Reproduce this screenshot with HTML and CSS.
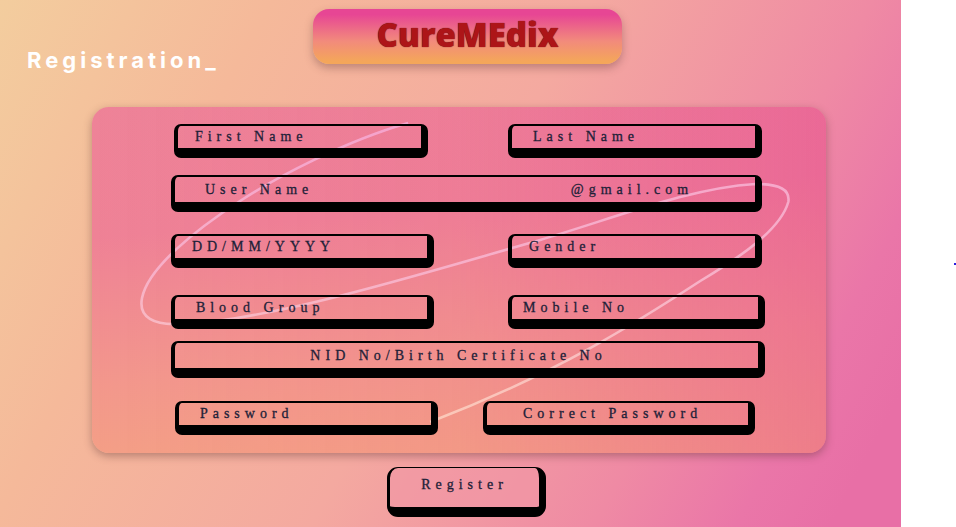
FILE: index.html
```html
<!DOCTYPE html>
<html lang="en">
<head>
<meta charset="utf-8">
<title>CureMEdix Registration</title>
<link rel="stylesheet" href="styles.css">
</head>
<body>
<main class="stage">
  <header class="header">
    <h1 class="heading">Registration_</h1>
    <div class="brand">CureMEdix</div>
  </header>
  <form class="form">
    <div class="panel">
      <svg class="swirl" viewBox="92 107 734 346" preserveAspectRatio="none" aria-hidden="true">
        <defs>
          <linearGradient id="swirl-ink" x1="0" y1="0" x2="0" y2="1">
            <stop offset="0" stop-color="#f5a3cc"/>
            <stop offset="0.5" stop-color="#f7b0c8"/>
            <stop offset="1" stop-color="#fbc9b8"/>
          </linearGradient>
        </defs>
        <path d="M408 123C345 141 275 178 240 201C195 230 148 268 142 298C138 318 155 325 178 324C270 322 440 268 540 240C620 216 690 188 755 184C780 184 790 190 788 202C780 230 740 257 700 281C640 320 560 372 430 422"/>
      </svg>
      <div class="row row-names">
        <input class="field pad-m" type="text" aria-label="First Name" placeholder="First Name">
        <input class="field pad-l" type="text" aria-label="Last Name" placeholder="Last Name">
      </div>
      <div class="row row-user">
        <div class="field field-tall field-group pad-xl">
          <input class="bare" type="text" aria-label="User Name" placeholder="User Name">
          <span class="suffix">@gmail.com</span>
        </div>
      </div>
      <div class="row row-birth">
        <input class="field pad-m" type="text" aria-label="Date of birth" placeholder="DD/MM/YYYY">
        <input class="field pad-m" type="text" aria-label="Gender" placeholder="Gender">
      </div>
      <div class="row row-contact">
        <input class="field pad-l" type="text" aria-label="Blood Group" placeholder="Blood Group">
        <input class="field pad-s" type="tel" aria-label="Mobile No" placeholder="Mobile No">
      </div>
      <div class="row row-id">
        <input class="field field-tall centered" type="text" aria-label="NID No/Birth Certificate No" placeholder="NID No/Birth Certificate No">
      </div>
      <div class="row row-password">
        <input class="field pad-l" type="password" aria-label="Password" placeholder="Password">
        <input class="field pad-xxl" type="password" aria-label="Correct Password" placeholder="Correct Password">
      </div>
    </div>
    <button class="register" type="submit">Register</button>
  </form>
</main>
<aside class="margin"><span class="marker"></span></aside>
</body>
</html>
```
FILE: styles.css
```css
* {
  box-sizing: border-box;
}

body {
  margin: 0;
  min-height: 100vh;
  display: grid;
  grid-template-columns: 901fr 55fr;
  background: #fff;
  font-family: "Liberation Serif", serif;
}

.stage {
  padding-top: 9px;
  background: linear-gradient(118deg, #f3cd9e 0%, #f5b99a 23%, #f4a9a0 50%, #ef8aa4 74%, #ea76a8 86%, #e86fa6 94%);
}

.header {
  display: grid;
  grid-template-columns: 313fr 309fr 279fr;
  align-items: start;
  height: 67px;
}

.heading {
  align-self: end;
  margin: 0;
  padding-left: 27px;
  font: 700 22px/32px Inter, sans-serif;
  letter-spacing: 4px;
  color: #fff;
}

.brand {
  height: 55px;
  border-radius: 16px;
  background: linear-gradient(#e74694 10%, #f28a7c 58%, #f4a65a 95%);
  box-shadow: 0 4px 8px rgba(90, 50, 50, 0.35);
  color: #ad1518;
  font: 800 33px/52px "Open Sans", sans-serif;
  text-align: center;
  text-shadow: 0 0 1px #4a0808;
}

.form {
  display: flex;
  flex-direction: column;
  align-items: center;
}

.panel {
  position: relative;
  align-self: flex-start;
  width: 81.5%;
  margin: 31px 0 14px 10.2%;
  padding: 17px 61px 18px 79px;
  border-radius: 17px;
  background:
    linear-gradient(to right, rgba(228, 70, 150, 0), rgba(228, 70, 150, 0.1) 50%, rgba(228, 70, 150, 0.42)),
    linear-gradient(175deg, #ee8398 0%, #ef8296 32%, #f3988c 68%, #f5a581 100%);
  box-shadow: 0 3px 8px rgba(90, 50, 50, 0.4);
}

.swirl {
  position: absolute;
  inset: 0;
  width: 100%;
  height: 100%;
  fill: none;
  stroke: url(#swirl-ink);
  stroke-width: 2.6;
}

.row {
  position: relative;
  display: grid;
}

.row-names {
  grid-template-columns: 1fr 1fr;
  gap: 80px;
  padding: 0 3px;
}

.row-user {
  margin-top: 17px;
  padding-right: 3px;
}

.row-birth {
  grid-template-columns: 263fr 254fr;
  gap: 74px;
  margin-top: 22px;
  padding-right: 3px;
}

.row-contact {
  grid-template-columns: 263fr 257fr;
  gap: 74px;
  margin-top: 27px;
}

.row-id {
  margin-top: 12px;
}

.row-password {
  grid-template-columns: 263fr 272fr;
  gap: 45px;
  margin-top: 23px;
  padding: 0 10px 0 4px;
}

.field {
  width: 100%;
  min-width: 0;
  height: 34px;
  padding: 0;
  border: solid #000;
  border-width: 2px 7px 10px 4px;
  border-radius: 7px;
  background: transparent;
  outline: 0;
}

.field-tall {
  height: 37px;
}

.field,
.bare,
.register {
  font: 14px/20px "Liberation Serif", serif;
  letter-spacing: 5px;
  color: #1d2138;
  -webkit-text-stroke: 0.3px #1d2138;
}

.field::placeholder,
.bare::placeholder {
  color: #1d2138;
  opacity: 1;
}

.field-group {
  display: flex;
  align-items: center;
  justify-content: space-between;
}

.bare {
  flex: 1;
  min-width: 0;
  padding: 0;
  border: 0;
  background: transparent;
  outline: 0;
}

.suffix {
  margin-right: 62px;
}

.pad-s { padding-left: 11px; }
.pad-m { padding-left: 17px; }
.pad-l { padding-left: 21px; }
.pad-xl { padding-left: 30px; }
.pad-xxl { padding-left: 36px; }

.centered {
  padding-right: 16px;
  text-align: center;
}

.register {
  width: 159px;
  height: 50px;
  margin-left: 32px;
  padding: 0 0 6px;
  border: solid #000;
  border-width: 1px 7px 10px 3px;
  border-radius: 11px;
  background: rgba(242, 150, 165, 0.6);
}

.margin {
  display: flex;
  align-items: center;
  justify-content: flex-end;
}

.marker {
  width: 2px;
  height: 2px;
  background: #2a1fe0;
}
```
